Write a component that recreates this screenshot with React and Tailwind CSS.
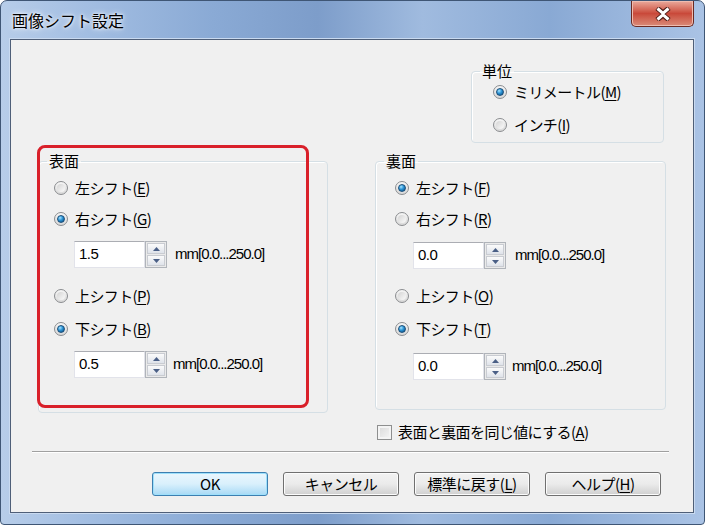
import React from "react";

const JP = { fontFamily: '"Noto Sans CJK JP", "Noto Sans", sans-serif' };
const NUM = { fontFamily: '"Liberation Sans", Arial, sans-serif' };

// --- small Win7 controls ---
const Radio = ({ checked }) => (
    <span className="w-[14px] h-[14px] rounded-full border border-[#8a8c8f] bg-gradient-to-b from-[#f6f6f6] to-[#d9d9d9] flex items-center justify-center shrink-0">
        {checked ? (
            <span className="w-[8px] h-[8px] rounded-full border border-[#1b4f7a] bg-[radial-gradient(circle_at_35%_30%,#a6e4ff,#2a93d6_45%,#0b4675)]" />
        ) : (
            <span className="w-[8px] h-[8px] rounded-full bg-gradient-to-br from-[#d4d4d4] to-[#fbfbfb]" />
        )}
    </span>
);

const Label = ({ text, k }) => (
    <span className="text-[15px] leading-[20px] text-black tracking-[-0.6px]" style={JP}>
        {text}(<span className="underline underline-offset-2">{k}</span>)
    </span>
);

const RadioRow = ({ checked, text, k, className = "" }) => (
    <div className={`flex items-center gap-[7px] h-[20px] ${className}`}>
        <Radio checked={checked} />
        <Label text={text} k={k} />
    </div>
);

const Arrow = ({ up }) => (
    <svg width="7" height="4" viewBox="0 0 7 4">
        {up ? <path d="M0 4 L3.5 0 L7 4 Z" fill="#4a5f86" /> : <path d="M0 0 L3.5 4 L7 0 Z" fill="#4a5f86" />}
    </svg>
);

const Spinner = ({ value, range = "mm[0.0...250.0]", gap = "gap-[8px]", className = "" }) => (
    <div className={`flex items-center ${gap} ${className}`}>
        <div className="flex h-[27px]">
            <div className="w-[71px] h-full bg-white border border-[#e2e3ea] border-t-[#abadb3] flex items-center pl-[4px]">
                <span className="text-[15px] text-black tracking-[-0.5px]" style={NUM}>{value}</span>
            </div>
            <div className="w-[22px] h-full border border-[#b0b4ba] bg-[#eaeaea] flex flex-col p-[1px] gap-[1px]">
                <div className="flex-1 border border-[#c9ccd2] bg-gradient-to-b from-[#fbfbfb] to-[#dfe3ea] flex items-center justify-center">
                    <Arrow up />
                </div>
                <div className="flex-1 border border-[#c9ccd2] bg-gradient-to-b from-[#fbfbfb] to-[#dfe3ea] flex items-center justify-center">
                    <Arrow />
                </div>
            </div>
        </div>
        <span className="text-[15px] tracking-[-1px] text-black" style={NUM}>{range}</span>
    </div>
);

// group box: legend sits on the top border
const Group = ({ title, className = "", bodyClass = "", children }) => (
    <fieldset className={`border border-[#d5dfe5] rounded-[4px] shadow-[inset_1px_1px_0_#ffffff] ${className}`}>
        <legend className="ml-[8px] px-[2px] text-[15px] leading-[16px] text-black" style={JP}>{title}</legend>
        <div className={bodyClass}>{children}</div>
    </fieldset>
);

const Btn = ({ children, primary }) => (
    <button
        className={`w-[116px] h-[24px] rounded-[3px] border text-[15px] leading-[20px] text-black flex items-center justify-center tracking-[-0.5px] ${
            primary
                ? "border-[#3c7fb1] bg-gradient-to-b from-[#eaf6fd] via-[#d9f0fc] to-[#a7d9f5] shadow-[inset_0_0_0_1px_#9ee0fb]"
                : "border-[#707070] bg-gradient-to-b from-[#f2f2f2] via-[#ebebeb] to-[#cfcfcf] shadow-[inset_0_0_0_1px_#fcfcfc]"
        }`}
        style={JP}
    >
        {children}
    </button>
);

export default function App() {
    return (
        <div className="w-[705px] h-[525px] overflow-hidden bg-white">
            {/* Window frame */}
            <div className="w-[705px] h-[525px] rounded-t-[7px] rounded-b-[4px] border border-[#3f5675] bg-[linear-gradient(90deg,#b7cde9_0%,#a3bee2_12%,#8aaad5_30%,#7d9dca_45%,#a0bbdf_60%,#89a9d4_78%,#aac3e5_100%)] flex flex-col">
                {/* Title bar */}
                <div className="h-[38px] flex justify-between items-start shrink-0">
                    <span className="pl-[11px] pt-[8px] text-[16px] leading-[22px] text-black [text-shadow:0_0_6px_#ffffff,0_0_3px_#ffffff]" style={JP}>
                        画像シフト設定
                    </span>
                    <div className="mr-[10px] w-[63px] h-[26px] rounded-b-[5px] border border-t-0 border-[#6b2a22] bg-gradient-to-b from-[#e9a99c] via-[#c9493a] to-[#d98a78] shadow-[inset_0_0_0_1px_#eebcb0] flex items-center justify-center">
                        <svg width="16" height="14" viewBox="0 0 16 14">
                            <path d="M2 1 L8 6 L14 1 M2 13 L8 8 L14 13" stroke="#4b1a14" strokeWidth="5" fill="none" />
                            <path d="M2.5 1.5 L8 6.3 L13.5 1.5 M2.5 12.5 L8 7.7 L13.5 12.5" stroke="#ffffff" strokeWidth="3" fill="none" />
                        </svg>
                    </div>
                </div>

                {/* Client area */}
                <div className="ml-[9px] mr-[10px] w-[684px] h-[474px] border border-[#4f5f78] bg-[#f0f0f0] flex flex-col relative shadow-[0_0_0_1px_#c9daf0]">
                    {/* 単位 */}
                    <Group title="単位" className="self-end mr-[29px] mt-[23px] w-[193px] h-[80px]" bodyClass="pl-[21px] pt-[3px]">
                        <RadioRow checked text="ミリメートル" k="M" />
                        <RadioRow text="インチ" k="I" className="mt-[13px]" />
                    </Group>

                    {/* 表面 / 裏面 */}
                    <div className="flex items-start mt-[10px]">
                        <Group title="表面" className="ml-[27px] w-[290px] h-[260px]" bodyClass="pl-[15px] pt-[9px]">
                            <RadioRow text="左シフト" k="E" />
                            <RadioRow checked text="右シフト" k="G" className="mt-[11px]" />
                            <Spinner value="1.5" className="ml-[20px] mt-[12px]" />
                            <RadioRow text="上シフト" k="P" className="mt-[18px]" />
                            <RadioRow checked text="下シフト" k="B" className="mt-[13px]" />
                            <Spinner value="0.5" gap="gap-[6px]" className="ml-[20px] mt-[12px]" />
                        </Group>
                        <Group title="裏面" className="ml-[47px] w-[291px] h-[257px]" bodyClass="pl-[19px] pt-[9px]">
                            <RadioRow checked text="左シフト" k="F" />
                            <RadioRow text="右シフト" k="R" className="mt-[11px]" />
                            <Spinner value="0.0" gap="gap-[9px]" className="ml-[18px] mt-[13px]" />
                            <RadioRow text="上シフト" k="O" className="mt-[17px]" />
                            <RadioRow checked text="下シフト" k="T" className="mt-[13px]" />
                            <Spinner value="0.0" gap="gap-[6px]" className="ml-[18px] mt-[14px]" />
                        </Group>
                    </div>

                    {/* same value checkbox */}
                    <div className="flex items-center gap-[6px] ml-[366px] mt-[9px] h-[20px]">
                        <span className="w-[15px] h-[15px] border border-[#8e8f8f] bg-gradient-to-br from-[#d8d8d8] to-[#f7f7f7] shadow-[inset_0_0_0_2px_#f4f4f4]" />
                        <span className="text-[15px] leading-[20px] text-black tracking-[-0.6px]" style={JP}>
                            表面と裏面を同じ値にする(<span className="underline underline-offset-2">A</span>)
                        </span>
                    </div>

                    {/* separator */}
                    <div className="ml-[21px] w-[637px] mt-[9px] h-[2px] border-t border-[#a0a0a0] border-b border-b-white" />

                    {/* buttons */}
                    <div className="flex gap-[15px] ml-[141px] mt-[19px]">
                        <Btn primary>OK</Btn>
                        <Btn>キャンセル</Btn>
                        <Btn>
                            標準に戻す(<span className="underline underline-offset-2">L</span>)
                        </Btn>
                        <Btn>
                            ヘルプ(<span className="underline underline-offset-2">H</span>)
                        </Btn>
                    </div>

                    {/* red highlight annotation */}
                    <div className="absolute left-[26px] top-[105px] w-[272px] h-[263px] border-[3px] border-[#d9202a] rounded-[8px] pointer-events-none" />
                </div>
            </div>
        </div>
    );
}
